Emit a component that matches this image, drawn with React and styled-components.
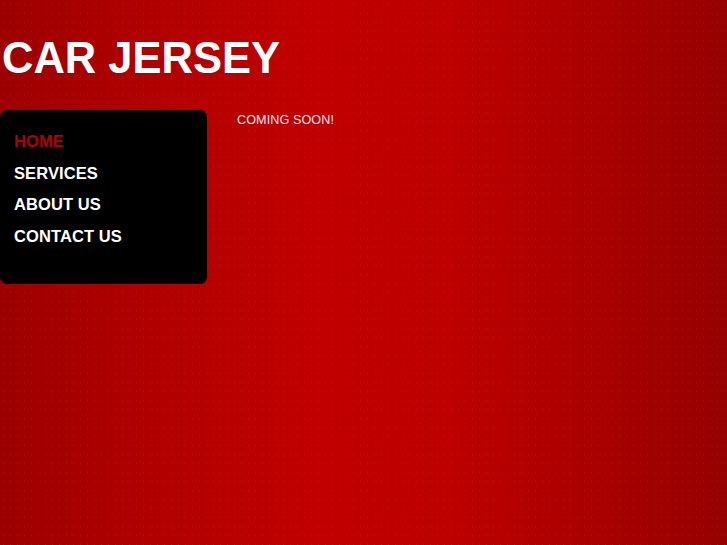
import React from 'react'
import styled, { createGlobalStyle } from 'styled-components'

const GlobalStyle = createGlobalStyle`
  html, body {
    margin: 0;
    padding: 0;
    height: 100%;
  }
  body {
    font-family: "Liberation Sans", Arial, sans-serif;
    background-color: #b00000;
    background-image:
      radial-gradient(rgba(235, 50, 50, 0.16) 0.5px, transparent 1px),
      radial-gradient(rgba(235, 50, 50, 0.12) 0.5px, transparent 1px),
      linear-gradient(to right, #9c0000 0%, #b00000 20%, #c10000 44%, #bd0000 62%, #a80000 83%, #960000 100%);
    background-size: 7px 9px, 11px 6px, 100% 100%;
    background-position: 0 0, 3px 4px, 0 0;
  }
  #root {
    min-height: 100%;
  }
`

const menu = [
  { label: 'HOME', active: true },
  { label: 'SERVICES' },
  { label: 'ABOUT US' },
  { label: 'CONTACT US' },
]

const App = () => {
  return (
    <>
      <GlobalStyle />
      <Page>
        <Title>CAR JERSEY</Title>
        <Main>
          <Sidebar>
            <Menu>
              {menu.map((item) => (
                <MenuItem key={item.label} active={item.active}>
                  {item.label}
                </MenuItem>
              ))}
            </Menu>
          </Sidebar>
          <Content>COMING SOON!</Content>
        </Main>
      </Page>
    </>
  )
}

const Page = styled.div`
  min-height: 545px;
`

const Title = styled.h1`
  margin: 0;
  padding: 34px 0 27px 2px;
  font-size: 43.5px;
  font-weight: bold;
  line-height: normal;
  color: #ffffff;
`

const Main = styled.div`
  display: flex;
  align-items: flex-start;
  gap: 30px;
`

const Sidebar = styled.nav`
  width: 207px;
  height: 174px;
  box-sizing: border-box;
  padding: 16px 14px 0 14px;
  background: #000000;
  border-radius: 7px;
`

const Menu = styled.ul`
  list-style: none;
  margin: 0;
  padding: 0;
`

const MenuItem = styled.li.withConfig({
  shouldForwardProp: (prop) => prop !== 'active',
})`
  font-size: 16.5px;
  font-weight: bold;
  line-height: 31.7px;
  letter-spacing: 0.1px;
  color: ${(props) => (props.active ? '#b30000' : '#ffffff')};
  cursor: pointer;
`

const Content = styled.div`
  padding-top: 3px;
  font-size: 12.6px;
  letter-spacing: 0.1px;
  color: #f4e6e6;
`

export default App
